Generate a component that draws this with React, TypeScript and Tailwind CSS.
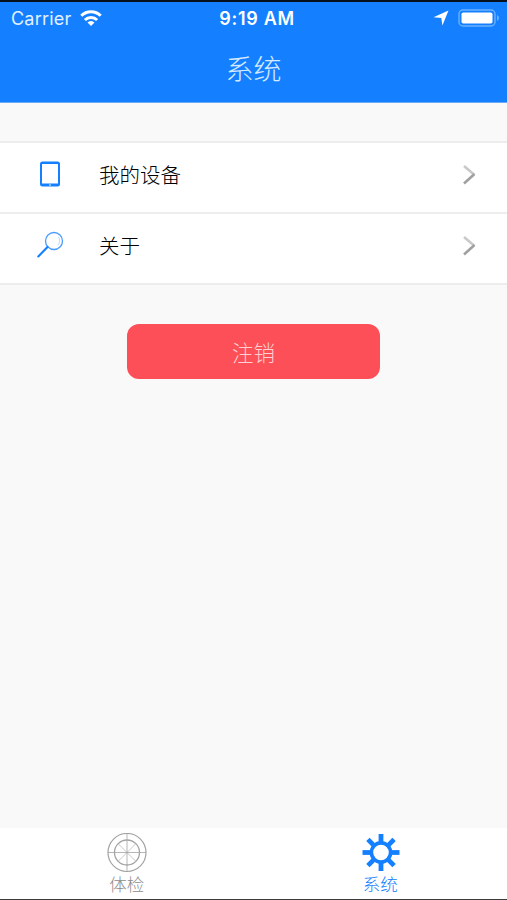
import type { ReactNode } from 'react';

interface MenuRowProps {
  icon: ReactNode;
  label: string;
}

const teeth = [0, 45, 90, 135, 180, 225, 270, 315];

export default function App() {
  return (
    <div className="flex h-[900px] w-[507px] flex-col overflow-hidden border-t-2 border-b border-t-[#07101f] border-b-[#3c3c3c] bg-[#f9f9f9] font-['Inter','Noto_Sans_CJK_SC',sans-serif]">
      <header className="h-[101px] shrink-0 border-b border-[#6aaaf5] bg-[#1480ff] text-white">
        <StatusBar />
        <h1 className="mt-[18px] text-center text-[28px] leading-9 font-light text-[#d5eaff]">系统</h1>
      </header>

      <main className="flex flex-1 flex-col">
        <div className="mt-[38px] border-t-2 border-[#ededed] bg-white">
          <MenuRow icon={<TabletIcon />} label="我的设备" />
          <MenuRow icon={<SearchIcon />} label="关于" />
        </div>
        <button className="mt-[39px] h-[55px] w-[253px] self-center rounded-[12px] bg-[#fd4f57] pt-0.5 text-[21.5px] leading-8 font-light text-[#ffd0d2]">
          注销
        </button>
      </main>

      <nav className="grid h-[71px] shrink-0 grid-cols-2 bg-white text-[17.5px] leading-6 font-light">
        <a className="flex flex-col items-center pt-[5px] text-[#8c8c8c]">
          <RadarIcon />
          <span>体检</span>
        </a>
        <a className="flex flex-col items-center pt-[5px] text-[#1480ff]">
          <GearIcon />
          <span>系统</span>
        </a>
      </nav>
    </div>
  );
}

function StatusBar() {
  return (
    <div className="grid h-8 grid-cols-3 items-center pl-[11px] text-[18px]">
      <div className="flex items-center gap-[9px]">
        <span className="tracking-[0.2px] text-[#e0f1ff]">Carrier</span>
        <svg width="22" height="16" viewBox="0 0 23 17" fill="none" stroke="currentColor" strokeWidth="3.2">
          <path d="M1.2 6.1a14.6 14.6 0 0 1 20.6 0" />
          <path d="M5 10.6a9.2 9.2 0 0 1 13 0" />
          <path d="M11.5 17 7.8 13.4a5 5 0 0 1 7.4 0Z" fill="currentColor" stroke="none" />
        </svg>
      </div>
      <span className="-ml-[4px] text-center font-semibold tracking-[0.7px] whitespace-nowrap">9:19 AM</span>
      <div className="flex items-center justify-end gap-[9px] pr-[7px]">
        <svg width="16" height="16" viewBox="0 0 16 16" fill="currentColor">
          <path d="M15.500 .500 9.400 15.400 8.300 8 .500 7.300Z" />
        </svg>
        <svg width="42" height="18" viewBox="0 0 42 18">
          <rect x="1" y="1" width="36" height="16" rx="4" fill="none" stroke="#6bb0ff" strokeWidth="1.4" />
          <rect x="3.5" y="3.5" width="31" height="11" rx="1.8" fill="currentColor" />
          <path d="M39 6v6q2-1 2-3t-2-3Z" fill="#6bb0ff" />
        </svg>
      </div>
    </div>
  );
}

function MenuRow({ icon, label }: MenuRowProps) {
  return (
    <div className="flex h-[71px] items-center border-b-2 border-[#ededed] pr-[31px] pb-[5px] pl-[35px]">
      <span className="flex w-[30px] justify-center">{icon}</span>
      <span className="ml-[34px] flex-1 pt-px text-[20.5px] leading-8 font-light text-black">{label}</span>
      <svg width="14" height="20" viewBox="0 0 14 20" fill="none" strokeWidth="2.6">
        <path d="m2 1 10 8.5" stroke="#c9c9c9" />
        <path d="M12.5 9 2 18.5" stroke="#a0a0a0" />
      </svg>
    </div>
  );
}

function TabletIcon() {
  return (
    <svg width="20" height="26" viewBox="0 0 20 26" className="-mt-0.5">
      <rect y="0.5" width="20" height="25" rx="2.5" fill="#1480ff" />
      <path d="M2 3h16v19.500H2z" fill="white" />
      <circle cx="10" cy="24" r="0.8" fill="white" />
    </svg>
  );
}

function SearchIcon() {
  return (
    <svg width="28" height="28" viewBox="0 0 28 28" fill="none" stroke="#1480ff" strokeLinecap="round" className="-mt-0.5">
      <circle cx="18" cy="10" r="8.5" stroke="#4b9cff" strokeWidth="1.3" />
      <path d="M22.500 6q3 4-.5 8" stroke="#9accff" strokeWidth="0.7" />
      <path d="m11.500 16-9.200 9.500" strokeWidth="2.1" />
    </svg>
  );
}

function RadarIcon() {
  return (
    <svg width="40" height="40" viewBox="0 0 40 40" fill="none" stroke="#a3a3a3" className="ml-px">
      <circle cx="20" cy="19.5" r="19" strokeWidth="1.2" />
      <circle cx="20" cy="19.5" r="12.5" strokeWidth="1.3" />
      <path d="M20 .500v38M1 19.500h38" strokeWidth="0.8" />
      <path d="m11.200 10.700 17.600 17.600m0-17.600L11.200 28.300" strokeWidth="0.6" />
    </svg>
  );
}

function GearIcon() {
  return (
    <svg width="40" height="40" viewBox="0 0 40 40" fill="none" stroke="currentColor" className="ml-px">
      <circle cx="20" cy="19.5" r="9.6" strokeWidth="3.6" />
      {teeth.map((angle) => (
        <path key={angle} d="M20 9V1" strokeWidth="4.8" transform={`rotate(${angle} 20 19.5)`} />
      ))}
    </svg>
  );
}
